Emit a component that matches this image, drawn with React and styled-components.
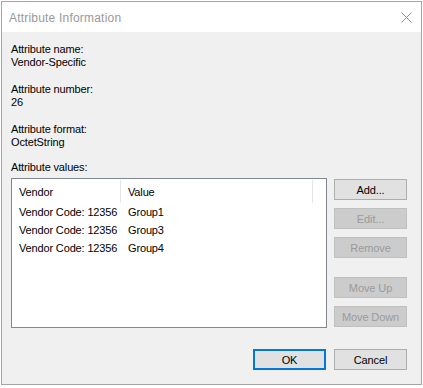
import styled, { createGlobalStyle } from 'styled-components';

const GlobalStyle = createGlobalStyle`
  html, body {
    margin: 0;
    padding: 0;
    background: #ffffff;
  }
  body {
    font-family: "Liberation Sans", Arial, sans-serif;
    font-size: 11px;
    color: #000;
  }
`;

const Page = styled.div`
  padding: 1px 0 0 1px;
`;

const Window = styled.div`
  width: 421px;
  height: 384px;
  box-sizing: border-box;
  border: 1px solid #a5a5a5;
  background: #f0f0f0;
  display: flex;
  flex-direction: column;
`;

const TitleBar = styled.div`
  height: 30px;
  background: #ffffff;
  display: flex;
  align-items: center;
  justify-content: space-between;
  padding: 0 9px 0 7px;
  flex-shrink: 0;
`;

const Title = styled.span`
  font-size: 12px;
  letter-spacing: 0.2px;
  color: #999999;
  margin-top: 1px;
`;

const CloseIcon = styled.svg`
  width: 11px;
  height: 11px;
  margin-top: 1px;
`;

const Body = styled.div`
  flex: 1;
  display: flex;
  flex-direction: column;
  padding: 11px 14px 14px 9px;
`;

const Field = styled.div`
  margin-bottom: ${({ $gap }) => $gap}px;
`;

const Line = styled.div`
  line-height: 13px;
  height: 13px;
  letter-spacing: -0.15px;
  white-space: nowrap;
`;

const Main = styled.div`
  display: flex;
  gap: 7px;
  margin-top: 4px;
`;

const ListBox = styled.div`
  width: 316px;
  height: 150px;
  box-sizing: border-box;
  border: 1px solid #828790;
  background: #ffffff;
`;

const HeaderRow = styled.div`
  display: flex;
  height: 24px;
`;

const HeaderCell = styled.div`
  width: ${({ $w }) => $w}px;
  box-sizing: border-box;
  padding-left: 7px;
  display: flex;
  align-items: center;
  letter-spacing: -0.15px;
  border-right: ${({ $divider }) => ($divider ? '1px solid #e5e5e5' : 'none')};
  margin-top: 1px;
  height: 23px;
`;

const Row = styled.div`
  display: flex;
  height: 18px;
  align-items: center;
`;

const Cell = styled.div`
  width: ${({ $w }) => $w}px;
  box-sizing: border-box;
  padding-left: 7px;
  letter-spacing: -0.15px;
  white-space: nowrap;
`;

const ButtonColumn = styled.div`
  display: flex;
  flex-direction: column;
  margin-top: 1px;
`;

const Button = styled.button`
  width: 73px;
  height: 21px;
  box-sizing: border-box;
  padding: 0;
  font-family: "Liberation Sans", Arial, sans-serif;
  font-size: 11px;
  letter-spacing: -0.1px;
  border: 1px solid ${({ disabled }) => (disabled ? '#bfbfbf' : '#adadad')};
  background: ${({ disabled }) => (disabled ? '#cccccc' : '#e1e1e1')};
  color: ${({ disabled }) => (disabled ? '#9b9b9b' : '#000000')};
  margin-top: ${({ $mt }) => $mt || 0}px;
  outline: none;

  ${({ $default }) =>
    $default &&
    `
    border: 2px solid #0078d7;
  `}
`;

const Footer = styled.div`
  display: flex;
  justify-content: flex-end;
  gap: 8px;
  margin-top: 21px;
`;

const rows = [
  ['Vendor Code: 12356', 'Group1'],
  ['Vendor Code: 12356', 'Group3'],
  ['Vendor Code: 12356', 'Group4'],
];

export default function App() {
  return (
    <>
      <GlobalStyle />
      <Page>
        <Window>
          <TitleBar>
            <Title>Attribute Information</Title>
            <CloseIcon viewBox="0 0 11 11">
              <path d="M0.5 0.5 L10.5 10.5 M10.5 0.5 L0.5 10.5" stroke="#8f8f8f" strokeWidth="1" fill="none" />
            </CloseIcon>
          </TitleBar>
          <Body>
            <Field $gap={14}>
              <Line>Attribute name:</Line>
              <Line>Vendor-Specific</Line>
            </Field>
            <Field $gap={14}>
              <Line>Attribute number:</Line>
              <Line>26</Line>
            </Field>
            <Field $gap={12}>
              <Line>Attribute format:</Line>
              <Line>OctetString</Line>
            </Field>
            <Line>Attribute values:</Line>
            <Main>
              <ListBox>
                <HeaderRow>
                  <HeaderCell $w={109} $divider>Vendor</HeaderCell>
                  <HeaderCell $w={192} $divider>Value</HeaderCell>
                </HeaderRow>
                {rows.map(([vendor, value], i) => (
                  <Row key={i}>
                    <Cell $w={109}>{vendor}</Cell>
                    <Cell $w={192}>{value}</Cell>
                  </Row>
                ))}
              </ListBox>
              <ButtonColumn>
                <Button>Add...</Button>
                <Button disabled $mt={8}>Edit...</Button>
                <Button disabled $mt={8}>Remove</Button>
                <Button disabled $mt={19}>Move Up</Button>
                <Button disabled $mt={8}>Move Down</Button>
              </ButtonColumn>
            </Main>
            <Footer>
              <Button $default>OK</Button>
              <Button>Cancel</Button>
            </Footer>
          </Body>
        </Window>
      </Page>
    </>
  );
}
